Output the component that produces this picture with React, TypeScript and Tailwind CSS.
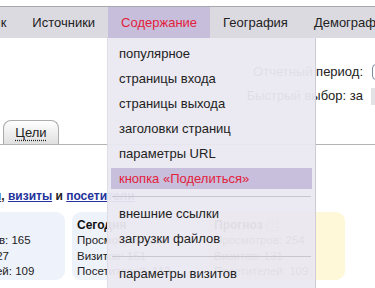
import React from "react";

const navItems = ["Трафик", "Источники", "Содержание", "География", "Демография", "Поведение"];

const menu: (string | null)[] = [
  "популярное",
  "страницы входа",
  "страницы выхода",
  "заголовки страниц",
  "параметры URL",
  "кнопка «Поделиться»",
  null,
  "внешние ссылки",
  "загрузки файлов",
  null,
  "параметры визитов",
];

function StatCard({
  title,
  rows,
  tone,
  wide,
  hint,
}: {
  title: string;
  rows: string[];
  tone: "blue" | "yellow";
  wide?: boolean;
  hint?: boolean;
}) {
  return (
    <div
      className={`shrink-0 h-[68px] rounded-[9px] pl-[5px] pt-[5px] ${wide ? "w-[136px]" : "w-[130px]"} ${
        tone === "blue" ? "bg-[#eef2fb]" : "bg-[#fff8d8]"
      }`}
    >
      <div className="flex items-center gap-[4px] h-[16px] text-[12px] font-bold text-[#111]">
        {title}
        {hint && (
          <span className="inline-flex items-center justify-center w-[11px] h-[11px] border border-[#9a9a9a] text-[8px] font-normal text-[#777] leading-none">
            ?
          </span>
        )}
      </div>
      {rows.map((r) => (
        <div key={r} className="h-[15.5px] leading-[15.5px] text-[11.5px] text-[#222] whitespace-nowrap">
          {r}
        </div>
      ))}
    </div>
  );
}

export default function App() {
  return (
    <div
      className="relative w-[375px] h-[288px] overflow-hidden bg-white text-[#222]"
      style={{ fontFamily: '"Liberation Sans", Arial, sans-serif' }}
    >
      {/* top navigation */}
      <div className="mt-[6px] border-t border-[#a9a7ae] bg-[#dcdae1] h-[32px] flex items-stretch -ml-[52px] whitespace-nowrap">
        {navItems.map((n) => (
          <div
            key={n}
            className={`flex items-center px-[13px] text-[13px] ${
              n === "Содержание" ? "bg-[#c6bedb] text-[#e3213c]" : "text-[#222]"
            }`}
          >
            {n}
          </div>
        ))}
      </div>

      {/* period form */}
      <div className="mt-[23px] w-[430px] flex flex-col gap-[2px] text-[13px] whitespace-nowrap">
        <div className="flex items-center justify-end gap-[9px] h-[22px]">
          <span>Отчетный период:</span>
          <div className="w-[58px] h-[16px] rounded-[4px] border border-[#7d8aa0] bg-white" />
        </div>
        <div className="flex items-center justify-end gap-[8px] h-[22px]">
          <span>Быстрый выбор: за</span>
          <div className="w-[59px] h-[17px] bg-[#e3e3e5]" />
        </div>
      </div>

      {/* tabs */}
      <div className="mt-[13px] border-b border-[#b3b3b3] flex items-end pl-[3px]">
        <div className="w-[56px] h-[24px] rounded-t-[8px] border border-b-0 border-[#ababab] bg-gradient-to-b from-white to-[#e0e0e0] flex items-center justify-center">
          <span className="text-[13px] text-[#222] underline decoration-dotted underline-offset-[3px]">Цели</span>
        </div>
      </div>

      {/* link line */}
      <div className="mt-[43px] h-[16px] flex items-center text-[12px] font-bold whitespace-nowrap">
        <a className="-ml-[9px] text-[#24339c] underline">ы</a>
        <span>,&nbsp;</span>
        <a className="text-[#24339c] underline">визиты</a>
        <span>&nbsp;и&nbsp;</span>
        <a className="text-[#24339c] underline">посетители</a>
      </div>

      {/* stat cards */}
      <div className="mt-[8px] flex gap-[7px] -ml-[65px]">
        <StatCard title="Вчера" tone="blue" rows={["Просмотров: 165", "Визитов: 127", "Посетителей: 109"]} />
        <StatCard title="Сегодня" tone="blue" rows={["Просмотров: 238", "Визитов: 151", "Посетителей: 112"]} />
        <StatCard title="Прогноз" hint tone="yellow" wide rows={["Просмотров: 254", "Визитов: 131", "Посетителей: 109"]} />
      </div>

      {/* dropdown menu */}
      <div className="absolute top-[38px] left-[107px] w-[209px] h-[260px] pt-[3px] bg-[#eae8f0]/95 border-l border-[#dedce4] border-r border-r-[#cfccd8] text-[13px]">
        {menu.map((m, i) =>
          m === null ? (
            <div key={i} className="h-[10px] flex items-center px-[4px]">
              <div className="w-full h-px bg-[#c9c6cf]" />
            </div>
          ) : m === "кнопка «Поделиться»" ? (
            <div key={i} className="h-[25px] py-[2px] px-[3px]">
              <div className="h-full flex items-center pl-[8px] bg-[#c7bfdb] text-[#e3213c]">{m}</div>
            </div>
          ) : (
            <div key={i} className="h-[25px] flex items-center pl-[11px] text-[#222]">
              {m}
            </div>
          )
        )}
      </div>
    </div>
  );
}
